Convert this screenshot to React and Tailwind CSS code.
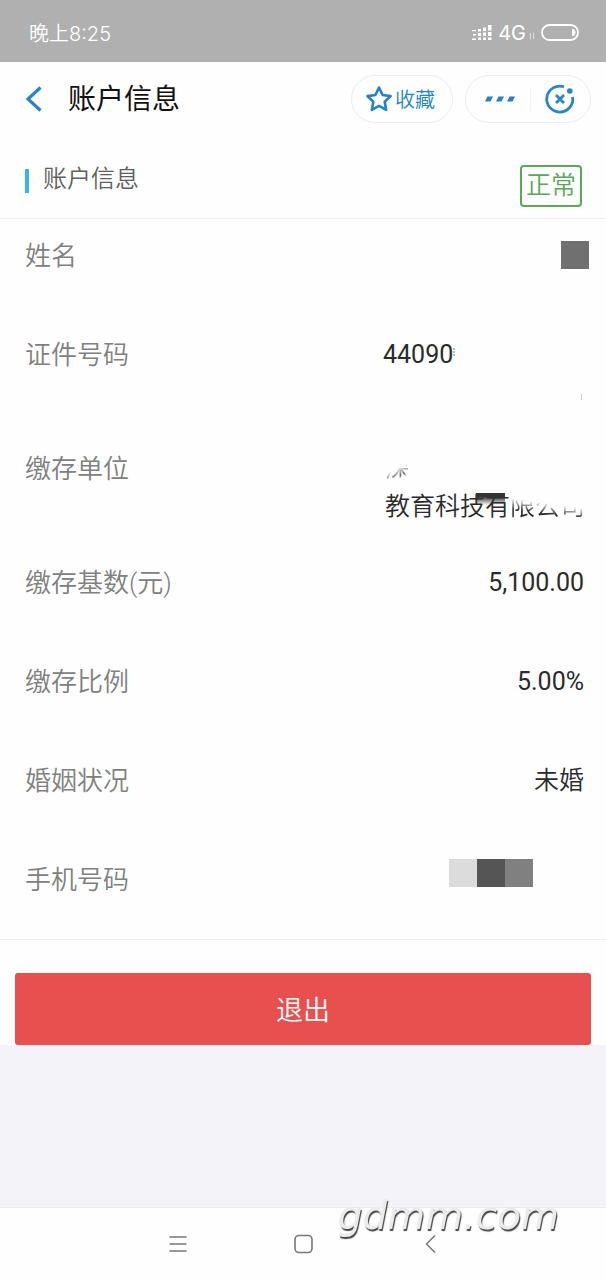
const FONT = "font-['Roboto','Noto_Sans_CJK_SC',sans-serif]";

function StatusBar() {
  return (
    <div className="flex h-[62px] items-center justify-between bg-[#b0b0b0] pt-1 pr-[26px] pl-[29px] text-white">
      <span className="pt-0.5 font-['Inter','Noto_Sans_CJK_SC',sans-serif] text-[20px] leading-6 font-[350]">晚上8:25</span>
      <div className="flex items-center">
        <svg width="22" height="18" viewBox="0 0 22 18" fill="#fff" aria-hidden="true">
          <path d="M0 6h4v1.200H0zM1 10h3v1.500H1zM0 14.500h4V16H0zM6 5h3v2.500H6zM6 9h3v3H6zM6 13.500h3V16H6zM11 3.500h3V7h-3zM11 8.500h3V12h-3zM11 13.500h3V16h-3zM16 1h3.500v5.500H16zM16 8h3.500v4H16zM16 13.500h3.500V16H16z" />
        </svg>
        <span className="ml-1 font-['Inter',sans-serif] text-[20px] leading-6">4G</span>
        <svg className="mt-1.5 ml-0.5" width="8" height="8" viewBox="0 0 8 8" stroke="#ffffff80" fill="none" aria-hidden="true">
          <path d="M2.500 7.500v-6l-1 1.500M5.500 .5v6l1-1.500" />
        </svg>
        <svg className="ml-1" width="40" height="20" viewBox="0 0 40 20" fill="none" aria-hidden="true">
          <rect x="2" y="2" width="36" height="15" rx="7.500" stroke="#fff" strokeWidth="1.800" />
          <path d="M32 6h1.500q2 1 2 3.500t-2 3.500H32z" fill="#fff" />
        </svg>
      </div>
    </div>
  );
}

function Header() {
  return (
    <header className="flex h-[74px] items-center pr-[15px] pl-6">
      <button type="button" aria-label="返回" className="mr-6">
        <svg width="20" height="28" viewBox="0 0 20 28" fill="none" stroke="#2585c7" strokeWidth="3.200">
          <path d="M16.500 2.500L4 14l12.500 11.500" />
        </svg>
      </button>
      <h1 className="flex-1 pt-0.5 text-[28px] leading-8 text-[#111]">账户信息</h1>
      <button type="button" className="mr-3 flex h-12 w-[102px] items-center justify-center gap-0.5 rounded-full border border-[#ececec] pr-1 text-[#2284c6]">
        <svg width="28" height="28" viewBox="0 0 28 28" fill="none" stroke="#2284c6" strokeWidth="2.600" strokeLinejoin="round" aria-hidden="true">
          <path d="M14 2.500l3.600 7.500 8 1.100-5.900 5.600 1.500 8.200L14 20.900l-7.200 4 1.500-8.200-5.900-5.600 8-1.100z" />
        </svg>
        <span className="pt-0.5 text-[20px] leading-6 font-[350]">收藏</span>
      </button>
      <div className="flex h-12 w-[126px] items-center rounded-full border border-[#ececec]">
        <button type="button" aria-label="更多" className="flex h-6 flex-1 items-center justify-center border-r border-[#f4f4f4] pl-1">
          <svg width="32" height="8" viewBox="0 0 32 8" fill="#2a7fc0">
            <path d="M3.500 1.500h5.500l-2.500 5H1zM14.500 1.500H20l-2.500 5H12zM25.500 1.500H31l-2.500 5H23z" />
          </svg>
        </button>
        <button type="button" aria-label="关闭" className="flex flex-1 items-center justify-center">
          <svg width="32" height="32" viewBox="0 0 32 32" fill="none" stroke="#2a84c6" strokeWidth="2.800">
            <path d="M20 3.800A13 13 0 1 0 28.600 14" />
            <path d="M12 12l8 8M20 12l-8 8" />
            <circle cx="25.800" cy="8" r="2.800" fill="#2a84c6" stroke="none" />
          </svg>
        </button>
      </div>
    </header>
  );
}

function Row({ label, children }) {
  return (
    <div className="flex min-h-[99px] justify-between pt-[18px] pr-[22px] pb-5 pl-[25px] leading-[38px] last:min-h-24">
      <dt className="text-[26px] font-[350] text-[#808080]">{label}</dt>
      <dd className="text-[25px] text-[#2b2b2b]">{children}</dd>
    </div>
  );
}

export default function App() {
  return (
    <div className={`flex min-h-screen flex-col bg-[#f3f3f9] ${FONT}`}>
      <StatusBar />
      <main className="bg-[#fefefe]">
        <Header />
        <div className="flex h-[83px] items-start justify-between border-b border-[#f0f0f0] pt-[29px] pr-6 pl-[25px]">
          <div className="flex items-center gap-3.5">
            <span className="mt-1 h-6 w-1 bg-[#3fb4e4]" />
            <h2 className="text-[24px] leading-7 font-[350] text-[#606060]">账户信息</h2>
          </div>
          <span className="flex h-[42px] w-[62px] justify-center rounded border-2 border-[#5aa85a] text-[25px] leading-[38px] font-[350] text-[#5aa85a]">
            正常
          </span>
        </div>
        <dl className="border-b border-[#f0f0f0]">
          <Row label="姓名">
            <span className="-mr-[5px] flex h-9 items-center">
              <span className="size-7 bg-[#707070]" />
            </span>
          </Row>
          <Row label="证件号码">
            <span className="block h-[76px] w-[201px]">
              <span className="relative inline-block">
                44090
                <span className="absolute top-3 left-full h-2 w-1 border-l-2 border-dotted border-[#bbb]" />
              </span>
              <span className="flex h-[38px] items-center justify-end">
                <span className="mt-2 mr-0.5 h-1.5 w-px bg-[#ccc]" />
              </span>
            </span>
          </Row>
          <Row label="缴存单位">
            <span className="relative block w-[199px] font-[350]">
              <span className="block w-[25px] mask-[linear-gradient(155deg,#0000_48%,#000b_66%,#0000_72%)]">深</span>
              <span className="block whitespace-nowrap">
                教育科技有
                <span className="inline-block mask-[linear-gradient(188deg,#0000_42%,#000_64%)]">限公司</span>
              </span>
              <span className="absolute top-[43px] left-[91px] h-3 w-[29px] bg-linear-to-b from-[#333] from-30% to-transparent" />
            </span>
          </Row>
          <Row label="缴存基数(元)">5,100.00</Row>
          <Row label="缴存比例">5.00%</Row>
          <Row label="婚姻状况">
            <span className="font-[350]">未婚</span>
          </Row>
          <Row label="手机号码">
            <span className="mr-[51px] -mt-0.5 flex">
              <span className="size-7 bg-[#dcdcdc]" />
              <span className="size-7 bg-[#555]" />
              <span className="size-7 bg-[#808080]" />
            </span>
          </Row>
        </dl>
        <div className="px-[15px] pt-[33px]">
          <button type="button" className="block h-[72px] w-full rounded-[3px] bg-[#e84f4f] pt-1 text-[27px] font-[350] text-white">
            退出
          </button>
        </div>
      </main>
      <div className="flex-1" />
      <nav className="relative flex h-[73px] items-center justify-center gap-[106px] border-t border-[#ebebeb] bg-[#fefefe] pl-0.5">
        <button type="button" aria-label="菜单">
          <svg width="20" height="20" viewBox="0 0 20 20" fill="none" stroke="#777" strokeWidth="1.500">
            <path d="M1.500 3h17M1.500 10h17M1.500 17h17" />
          </svg>
        </button>
        <button type="button" aria-label="主屏幕">
          <svg width="20" height="20" viewBox="0 0 20 20" fill="none" stroke="#777" strokeWidth="1.600">
            <rect x="1" y="1.500" width="17" height="17" rx="4" />
          </svg>
        </button>
        <button type="button" aria-label="后退">
          <svg width="20" height="20" viewBox="0 0 20 20" fill="none" stroke="#777" strokeWidth="1.500">
            <path d="M15 1.500L6.500 10l8.500 8.500" />
          </svg>
        </button>
        <span className="absolute -top-4 right-[47px] font-['DejaVu_Sans',sans-serif] text-[39px] leading-[48px] text-[#ebebeb] italic antialiased opacity-99 [text-shadow:1px_2px_1px_#444]">
          gdmm.com
        </span>
      </nav>
    </div>
  );
}
